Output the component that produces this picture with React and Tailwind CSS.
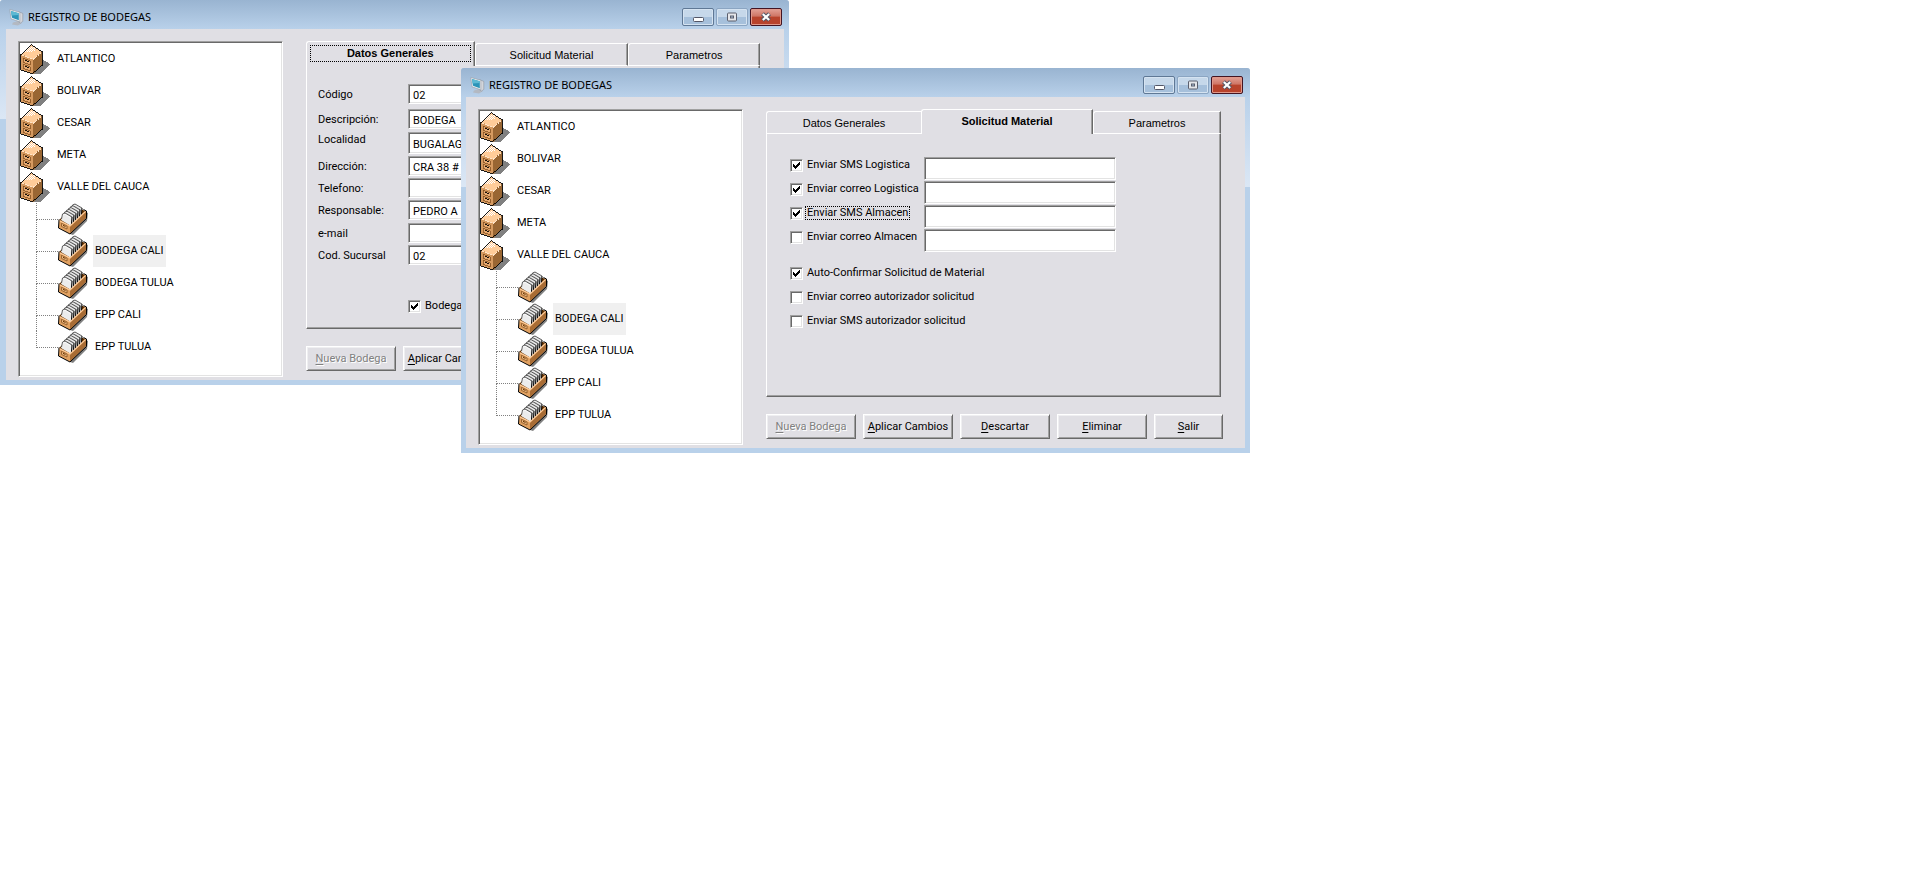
import { useId } from "react";

const sunken =
  "border border-t-[#a0a0a0] border-l-[#a0a0a0] border-r-white border-b-white bg-white shadow-[inset_1px_1px_0_#696969,inset_-1px_-1px_0_#e3e3e3]";

function ComputerIcon() {
  return (
    <svg width="16" height="18" viewBox="0 0 16 18" aria-hidden="true">
      <path d="M4 14.5 L9 13 L13 15 L9 17.5 L3 16.5 Z" fill="#b3b9c2" />
      <path d="M9.5 3.6 L13.8 5.4 V13.4 L11.5 15 L9.5 14 Z" fill="#d3d6db" stroke="#8d949f" strokeWidth="0.6" />
      <path d="M0.8 1.5 L10.8 4.2 V13.8 L2 10.8 Z" fill="#f1f3f5" stroke="#9aa2ac" strokeWidth="0.7" />
      <path d="M2 3 L9.8 5.2 V12.2 L3 9.8 Z" fill="#2b94b8" />
      <path d="M2 3 L9.8 5.2 V7 L2.5 7.6 Z" fill="#5cb9d3" />
    </svg>
  );
}

function CabinetIcon() {
  return (
    <svg className="shrink-0" width="32" height="32" viewBox="0 0 32 32" shapeRendering="crispEdges" aria-hidden="true">
      <polygon points="22,16 30,21 20,31 12,31 13,28" fill="#808080" />
      <polygon points="1,11 11,2 22,9 13,16" fill="#ffcc99" />
      <polygon points="1,11 13,16 13,31 1,27" fill="#d69a60" />
      <polygon points="13,16 22,9 22,22 13,31" fill="#996633" />
      <path d="M9 4h1M11 4h1M13 4h1M8 5h1M10 5h1M12 5h1M14 5h1M7 6h1M9 6h1M11 6h1M13 6h1M6 7h1M8 7h1M10 7h1M12 7h1M14 7h1M5 8h1M7 8h1M9 8h1M11 8h1" transform="translate(0 .5)" stroke="#fff" />
      <path d="M2 12 L13 16.5 L21 10" fill="none" stroke="#ffe4c8" strokeDasharray="2 1" />
      <path d="M0.5 11 L11 1.5 L22.5 9 V22 L12 31 L0.5 27 Z" fill="none" stroke="#000" strokeWidth="0.9" />
      <path d="M3 15 L10 18 V22 L3 19 Z M3 21 L10 24 V28 L3 25 Z" fill="#e8ab72" stroke="#84501f" strokeWidth="0.8" />
      <path d="M5 17.5h2M7 18.5h2M5 23.5h2M7 24.5h2" stroke="#000" strokeWidth="0.9" />
    </svg>
  );
}

function CardBoxIcon() {
  return (
    <svg className="shrink-0" width="30" height="32" viewBox="0 0 30 32" aria-hidden="true">
      <polygon points="28,9 30,10 29,18 15,32 12,31" fill="#808080" />
      <polygon points="1,17 15,4 28,8 12,23" fill="#663300" />
      {[5, 4, 3, 2, 1, 0].map((i) => (
        <g key={i} transform={`translate(${2 * i} ${-1.8 * i})`}>
          <polygon points="3,17 4.5,11 7,10 14,14.5 13,23" fill={i === 0 ? "#ececec" : "#cccccc"} />
          <path d="M3.5 16 L4.5 11 L7 10 L14 14" fill="none" stroke="#3a3a3a" strokeWidth="0.8" />
          <path d="M5 12.2 L7 11.2 L13 15" fill="none" stroke="#fff" strokeWidth="0.7" />
          <path d="M14 14 L13.4 22" stroke="#000" strokeWidth="1" />
        </g>
      ))}
      <polygon points="1,17 12,22.5 12,31 1,25" fill="#e0a060" />
      <polygon points="12,22.5 28,8 28,15 12,31" fill="#a86c34" />
      <path d="M1 17.5 L12 23 L27.5 8.5" fill="none" stroke="#ffcc99" strokeWidth="1.3" />
      <path d="M1 16.5 L0.5 25 L12 31 L28.5 15.5 V8 L25.5 6.5" fill="none" stroke="#000" />
      <path d="M3.5 20.3 L9 23 V26 L3.5 23.4 Z" fill="#f3bd86" stroke="#84501f" strokeWidth="0.8" />
      <path d="M5 22.3 L7.5 23.5" stroke="#663300" />
    </svg>
  );
}

function CaptionButton({ label, tone, children }) {
  return (
    <button type="button" aria-label={label} className={`flex h-[18px] w-8 items-center justify-center rounded-[2px] border ${tone}`}>
      {children}
    </button>
  );
}

function CaptionButtons() {
  const blue = "bg-linear-to-b from-[#c6d8ea] from-50% to-[#a6c0db] to-50% shadow-[inset_0_0_0_1px_#d5e3f1]";
  return (
    <div className="flex gap-0.5">
      <CaptionButton label="Minimizar" tone={`border-[#5f7895] ${blue}`}>
        <svg width="13" height="12" viewBox="0 0 13 12">
          <rect x="1.5" y="6.5" width="10" height="4" rx="1" fill="#fff" stroke="#535666" />
        </svg>
      </CaptionButton>
      <CaptionButton label="Maximizar" tone={`border-[#8ba5c2] ${blue}`}>
        <svg width="12" height="12" viewBox="0 0 12 12">
          <rect x="1.5" y="2" width="9" height="8" rx="1" fill="#e4e6ea" stroke="#5b5f6d" />
          <rect x="4.5" y="5" width="3" height="2" fill="#a9c0d8" stroke="#5b5f6d" />
        </svg>
      </CaptionButton>
      <CaptionButton
        label="Cerrar"
        tone="border-[#431422] bg-linear-to-b from-[#e2a197] from-0% via-[#cf7565] via-45% to-[#b8432c] to-50% shadow-[inset_0_0_0_1px_#e0988a]"
      >
        <svg width="12" height="10" viewBox="0 0 12 10">
          <path d="M2.5 1.8 L9.5 8.2 M9.5 1.8 L2.5 8.2" stroke="#535666" strokeWidth="4.2" />
          <path d="M2.8 2 L9.2 8 M9.2 2 L2.8 8" stroke="#fff" strokeWidth="2.2" />
        </svg>
      </CaptionButton>
    </div>
  );
}

const regions = ["ATLANTICO", "BOLIVAR", "CESAR", "META", "VALLE DEL CAUCA"];
const stores = ["", "BODEGA CALI", "BODEGA TULUA", "EPP CALI", "EPP TULUA"];

function Tree() {
  return (
    <div className={`h-[336px] w-[265px] shrink-0 p-px ${sunken}`}>
      <ul>
        {regions.map((name) => (
          <li key={name} className="flex h-8 items-center gap-[5px]">
            <CabinetIcon />
            <span className="pt-px">{name}</span>
          </li>
        ))}
      </ul>
      <ul className="pl-4">
        {stores.map((name, i) => (
          <li key={name} className="flex h-8 items-center">
            <span className="flex h-8 w-[22px] flex-col">
              <span className="h-[17px] border-b border-l border-dotted border-[#808080]" />
              {i < stores.length - 1 && <span className="grow border-l border-dotted border-[#808080]" />}
            </span>
            <CardBoxIcon />
            <span
              className={`ml-[5px] flex h-8 items-center px-0.5 pt-px ${name === "BODEGA CALI" ? "bg-[#f0f0f0]" : ""}`}
            >
              {name}
            </span>
          </li>
        ))}
      </ul>
    </div>
  );
}

function CheckBox({ label, checked, focused }) {
  const id = useId();
  return (
    <div className="flex h-6 items-center gap-0.5">
      <span className="grid">
        <input
          id={id}
          type="checkbox"
          defaultChecked={checked}
          className={`peer col-start-1 row-start-1 size-[13px] appearance-none ${sunken}`}
        />
        <svg
          className="pointer-events-none invisible col-start-1 row-start-1 peer-checked:visible"
          width="13"
          height="13"
          viewBox="0 0 13 13"
          shapeRendering="crispEdges"
          aria-hidden="true"
        >
          <path d="M3 5h1v1h1v1h1v-1h1v-1h1v-1h1v-1h1v3h-1v1h-1v1h-1v1h-1v1h-1v-1h-1v-1h-1z" fill="#000" />
        </svg>
      </span>
      <label htmlFor={id} className={`border px-px leading-3 ${focused ? "border-dotted border-black" : "border-transparent"}`}>
        {label}
      </label>
    </div>
  );
}

const fields = [
  { label: "Código", value: "02" },
  { label: "Descripción:", value: "BODEGA" },
  { label: "Localidad", value: "BUGALAG", tall: true },
  { label: "Dirección:", value: "CRA 38 #" },
  { label: "Telefono:", value: "" },
  { label: "Responsable:", value: "PEDRO A" },
  { label: "e-mail", value: "" },
  { label: "Cod. Sucursal", value: "02" },
];

function Field({ label, value, tall }) {
  const id = useId();
  return (
    <>
      <label htmlFor={id} className={tall ? "leading-4" : "leading-[22px]"}>
        {label}
      </label>
      <input id={id} defaultValue={value} className={`w-[200px] px-1 pt-0.5 ${tall ? "h-[22px]" : "h-5"} ${sunken}`} />
    </>
  );
}

function GeneralPanel() {
  return (
    <div className="pt-[18px] pl-[11px]">
      <div className="grid grid-cols-[90px_1fr] grid-rows-[25px_23px_24px_22px_22px_23px_22px_22px] items-start">
        {fields.map((f) => (
          <Field key={f.label} {...f} />
        ))}
      </div>
      <div className="mt-[27px] ml-[90px]">
        <CheckBox label="Bodega" checked />
      </div>
    </div>
  );
}

function RequestPanel() {
  return (
    <div className="flex gap-2.5 pt-[19px] pl-[23px]">
      <div className="w-[124px] whitespace-nowrap">
        <CheckBox label="Enviar SMS Logistica" checked />
        <CheckBox label="Enviar correo Logistica" checked />
        <CheckBox label="Enviar SMS Almacen" checked focused />
        <CheckBox label="Enviar correo Almacen" />
        <div className="mt-3">
          <CheckBox label="Auto-Confirmar Solicitud de Material" checked />
          <CheckBox label="Enviar correo autorizador solicitud" />
          <CheckBox label="Enviar SMS autorizador solicitud" />
        </div>
      </div>
      <div className="mt-1 flex flex-col gap-px">
        {["SMS Logistica", "correo Logistica", "SMS Almacen", "correo Almacen"].map((name) => (
          <input key={name} aria-label={name} className={`h-[23px] w-48 px-1 ${sunken}`} />
        ))}
      </div>
    </div>
  );
}

const tabNames = ["Datos Generales", "Solicitud Material", "Parametros"];

function TabBar({ active, columns, focused }) {
  return (
    <div role="tablist" className={`mr-0.5 grid h-[25px] items-end font-['Liberation_Sans',sans-serif] ${columns}`}>
      {tabNames.map((name, i) => {
        const on = i === active;
        const beforeActive = i === active - 1;
        return (
          <button
            key={name}
            type="button"
            role="tab"
            aria-selected={on}
            className={`rounded-tl-[3px] border-t border-l border-white px-[3px] ${
              on ? "h-[25px] pt-[3px] pb-1 font-bold" : "h-[23px] border-b pt-0.5"
            } ${beforeActive ? "" : "border-r border-r-[#696969] shadow-[inset_-1px_0_0_#a0a0a0]"}`}
          >
            <span
              className={`flex h-full items-center justify-center border ${
                on && focused ? "border-dotted border-black" : "border-transparent"
              }`}
            >
              {name}
            </span>
          </button>
        );
      })}
    </div>
  );
}

function PushButton({ text, width, disabled }) {
  return (
    <button
      type="button"
      disabled={disabled}
      className={`h-[25px] shrink-0 border border-t-white border-l-white border-r-[#696969] border-b-[#696969] bg-[#e0dfe4] pt-0.5 shadow-[inset_1px_1px_0_#efeff1,inset_-1px_-1px_0_#a0a0a0] disabled:text-[#808080] disabled:text-shadow-[1px_1px_0_#fff] ${width}`}
    >
      <span className="underline underline-offset-2">{text[0]}</span>
      {text.slice(1)}
    </button>
  );
}

function AppWindow({ place, frame, active, columns, focused, actions, children }) {
  return (
    <section className={`absolute w-[789px] rounded-t-[3px] bg-[#b9d1ea] pb-[5px] ${place}`}>
      <header className="flex h-[29px] items-center justify-between rounded-t-[3px] bg-linear-to-b from-[#99b4d1] to-[#b9d1ea] pt-[5px] pr-[7px] pl-[9px]">
        <div className="flex items-center gap-[3px]">
          <ComputerIcon />
          <h1 className="font-['Noto_Sans',sans-serif] text-[11px] leading-4 text-black">REGISTRO DE BODEGAS</h1>
        </div>
        <CaptionButtons />
      </header>
      <div className="flex">
        <div className={`h-[90px] shrink-0 bg-linear-to-b from-[#b9d1ea] to-[#dbe7f5] ${frame}`} />
        <div className="flex min-w-0 grow gap-[23px] bg-[#e0dfe4] pt-3 pr-[22px] pb-[3px] pl-3">
          <Tree />
          <div className="flex min-w-0 grow flex-col">
            <TabBar active={active} columns={columns} focused={focused} />
            <div
              role="tabpanel"
              className="mr-0.5 h-[263px] border border-t-0 border-l-white border-r-[#696969] border-b-[#696969] shadow-[inset_-1px_-1px_0_#a0a0a0]"
            >
              {children}
            </div>
            <div className="mt-[17px] flex gap-[7px]">
              {actions.map((text) => (
                <PushButton
                  key={text}
                  text={text}
                  width={text === "Salir" ? "w-[69px]" : "w-[90px]"}
                  disabled={text === "Nueva Bodega"}
                />
              ))}
            </div>
          </div>
        </div>
        <div className="h-[90px] w-[5px] shrink-0 bg-linear-to-b from-[#b9d1ea] to-[#dbe7f5]" />
      </div>
    </section>
  );
}

export default function App() {
  return (
    <main className="relative min-h-screen overflow-hidden bg-white font-[Roboto,sans-serif] text-[11px] text-black">
      <AppWindow
        place="top-0 left-0"
        frame="w-1.5"
        active={0}
        columns="grid-cols-[169fr_154fr_132fr]"
        actions={["Nueva Bodega", "Aplicar Cambios"]}
        focused
      >
        <GeneralPanel />
      </AppWindow>
      <AppWindow
        place="top-[68px] left-[461px]"
        frame="w-[5px]"
        active={1}
        columns="grid-cols-[155fr_172fr_128fr]"
        actions={["Nueva Bodega", "Aplicar Cambios", "Descartar", "Eliminar", "Salir"]}
      >
        <RequestPanel />
      </AppWindow>
    </main>
  );
}
